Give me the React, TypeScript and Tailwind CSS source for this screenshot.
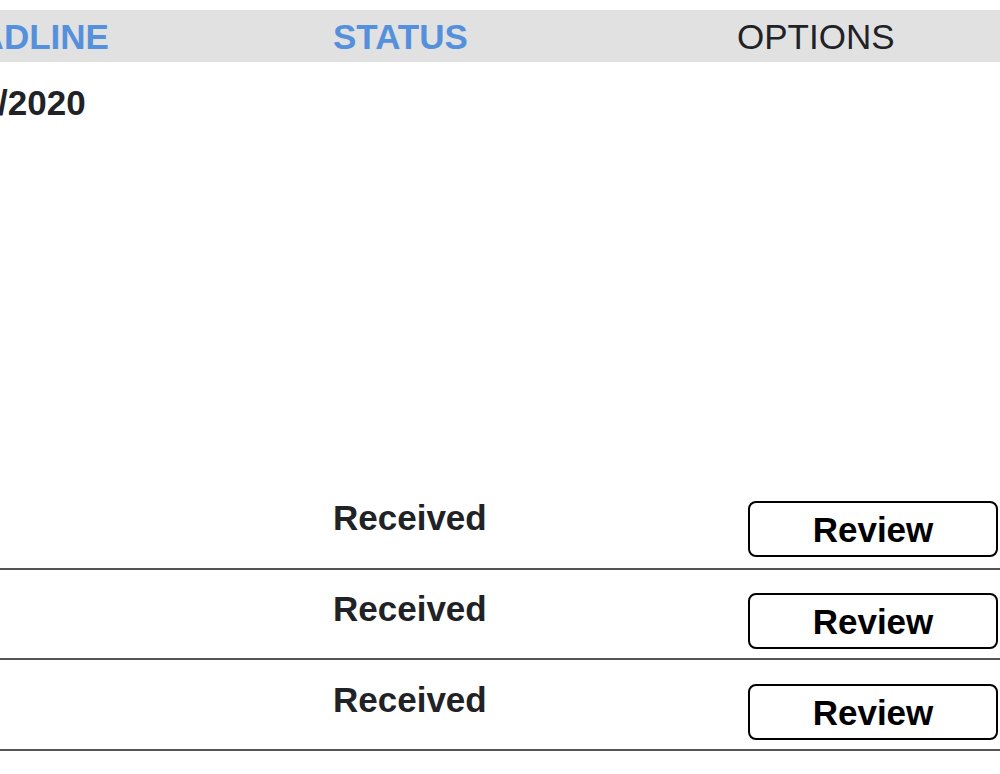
import React from "react";

const font = { fontFamily: '"Liberation Sans", Arial, Helvetica, sans-serif' };

function ReviewButton() {
  return (
    <button className="w-[250px] h-[56px] border-2 border-black rounded-[8px] bg-white text-black text-[35px] font-bold leading-none flex items-center justify-center">
      Review
    </button>
  );
}

function DataRow({ first, date, tall }: { first?: boolean; date?: string; tall?: boolean }) {
  if (first) {
    return (
      <div className="flex h-[508px] border-b-2 border-[#555555]">
        <div className="w-[403px] shrink-0 pt-[23px] text-[35px] font-bold leading-none text-[#212226]">
          {date}
        </div>
        <div className="w-[415px] shrink-0 self-end pb-[11px] h-[67px] text-[35px] font-bold leading-none text-[#212226]">
          <div className="-mt-[1px]">Received</div>
        </div>
        <div className="self-end pb-[11px]">
          <ReviewButton />
        </div>
      </div>
    );
  }
  return (
    <div
      className={
        tall
          ? "flex h-[91px] pt-[24px] pb-[9px] border-b-2 border-[#555555] items-start"
          : "flex h-[90px] pt-[23px] pb-[9px] border-b-2 border-[#555555] items-start"
      }
    >
      <div className="w-[403px] shrink-0" />
      <div className="w-[415px] shrink-0 text-[35px] font-bold leading-none text-[#212226]">
        <div className="-mt-[2px]">Received</div>
      </div>
      <ReviewButton />
    </div>
  );
}

export default function App() {
  return (
    <div className="w-[1000px] h-[774px] bg-white overflow-hidden" style={font}>
      <div className="ml-[-70px] w-[1070px] pt-[10px]">
        <div className="flex items-center h-[52px] bg-[#e1e1e1] text-[35px] leading-none">
          <div className="w-[403px] shrink-0 font-bold text-[#5590dc]">DEADLINE</div>
          <div className="w-[404px] shrink-0 font-bold text-[#5590dc]">STATUS</div>
          <div className="text-[#212226]">OPTIONS</div>
        </div>
        <DataRow first date="1/10/2020" />
        <DataRow />
        <DataRow tall />
      </div>
    </div>
  );
}
